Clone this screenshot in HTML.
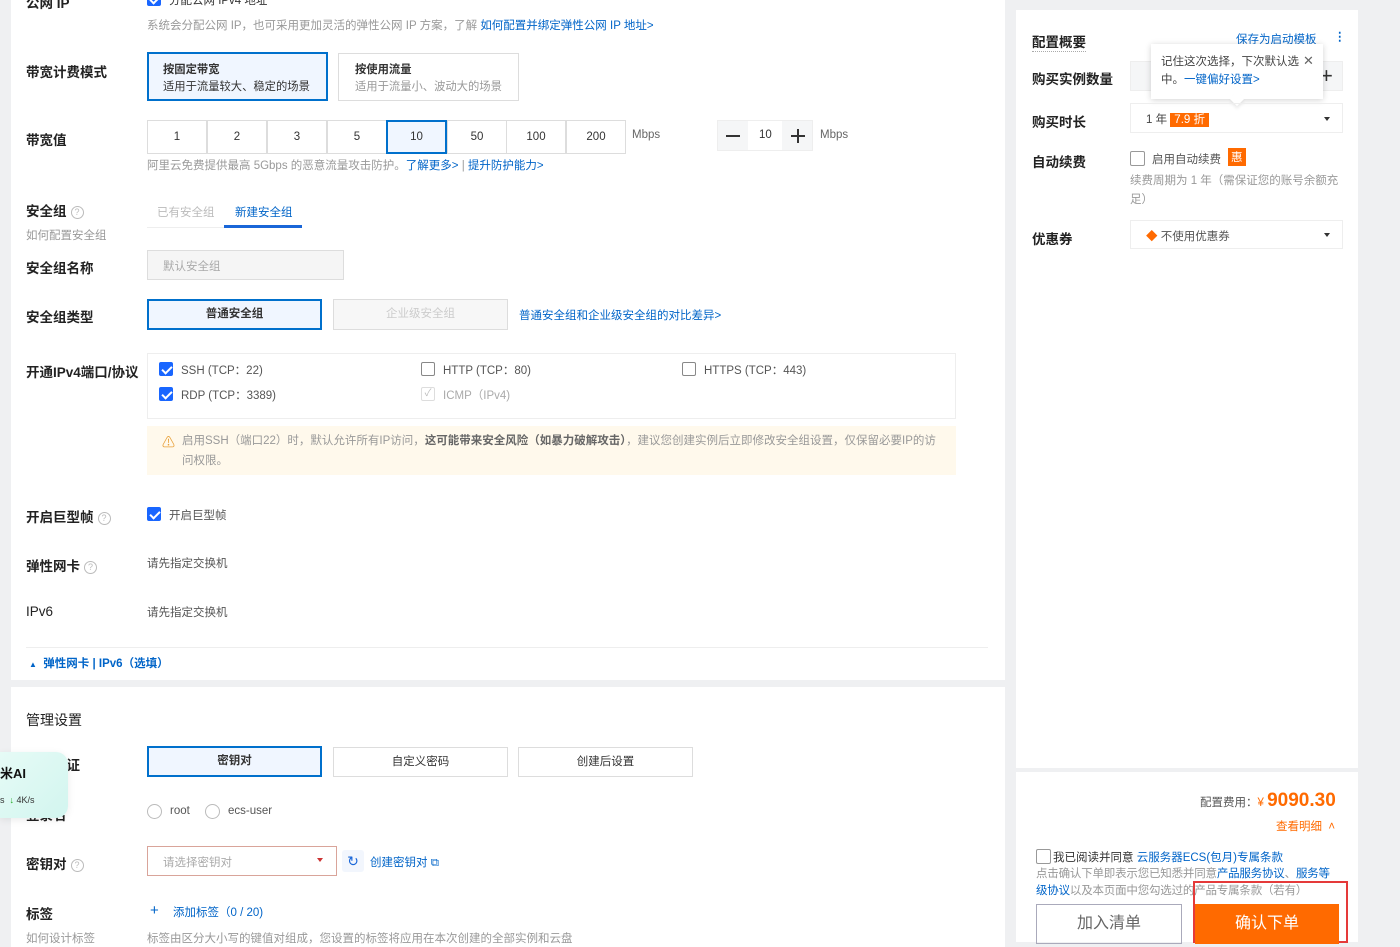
<!DOCTYPE html>
<html><head><meta charset="utf-8">
<style>
*{margin:0;padding:0;box-sizing:border-box}
body{width:1400px;height:941px;overflow:hidden;background:#eff0f2;font-family:"Liberation Sans","Noto Sans CJK SC",sans-serif;font-size:11.5px;color:#333;position:relative}
.a{position:absolute;white-space:nowrap}
.panel{position:absolute;background:#fff}
.lbl{position:absolute;font-size:13.5px;font-weight:bold;color:#222;white-space:nowrap}
.g{color:#999}
.blue{color:#0064c8}
.box{position:absolute;border:1px solid #ddd;background:#fff;text-align:center;color:#333}
.sel{border:2px solid #0070cc;background:#f0f6ff}
.cb{position:absolute;width:14px;height:14px;border:1px solid #888;border-radius:2px;background:#fff}
.cb.on{background:#1966ff;border-color:#1966ff}
.cb.on::after{content:"";position:absolute;left:4px;top:1px;width:4px;height:8px;border:solid #fff;border-width:0 2px 2px 0;transform:rotate(45deg)}
.q{display:inline-block;width:13px;height:13px;border:1px solid #bbb;border-radius:50%;font-size:9px;color:#bbb;text-align:center;line-height:11px;font-weight:normal;vertical-align:1px;margin-left:4px}
.radio{position:absolute;width:15px;height:15px;border:1px solid #bbb;border-radius:50%}
</style></head><body>

<div class="panel" style="left:11px;top:0;width:994px;height:680px"></div>
<div class="lbl" style="left:26px;top:-8px">公网 IP</div>
<div class="cb on" style="left:147px;top:-8px"></div>
<div class="a" style="left:169px;top:-8px">分配公网 IPv4 地址</div>
<div class="a g" style="left:147px;top:17px">系统会分配公网 IP，也可采用更加灵活的弹性公网 IP 方案，了解 <span class="blue">如何配置并绑定弹性公网 IP 地址&gt;</span></div>

<div class="lbl" style="left:26px;top:61px">带宽计费模式</div>
<div class="box sel" style="left:147px;top:52px;width:181px;height:49px;text-align:left;padding:8px 14px;line-height:17px;font-weight:bold;color:#333;font-size:11.3px">按固定带宽<br><span style="font-weight:normal">适用于流量较大、稳定的场景</span></div>
<div class="box" style="left:338px;top:53px;width:181px;height:48px;text-align:left;padding:8px 16px;line-height:17px;font-weight:bold;color:#333;font-size:11.3px">按使用流量<br><span style="font-weight:normal;color:#999">适用于流量小、波动大的场景</span></div>

<div class="lbl" style="left:26px;top:129px">带宽值</div>
<div class="box" style="left:147px;top:120px;width:60px;height:34px;line-height:32px">1</div>
<div class="box" style="left:207px;top:120px;width:60px;height:34px;line-height:32px">2</div>
<div class="box" style="left:267px;top:120px;width:60px;height:34px;line-height:32px">3</div>
<div class="box" style="left:327px;top:120px;width:60px;height:34px;line-height:32px">5</div>
<div class="box sel" style="left:386px;top:120px;width:61px;height:34px;line-height:30px">10</div>
<div class="box" style="left:447px;top:120px;width:60px;height:34px;line-height:32px">50</div>
<div class="box" style="left:506px;top:120px;width:60px;height:34px;line-height:32px">100</div>
<div class="box" style="left:566px;top:120px;width:60px;height:34px;line-height:32px">200</div>
<div class="a" style="left:632px;top:129px;color:#666">Mbps</div>
<div class="a" style="left:717px;top:120px;width:96px;height:31px;background:#f5f6f7;border:1px solid #eee"></div>
<div class="a" style="left:748px;top:121px;width:34px;height:29px;background:#fff"></div>
<div class="a" style="left:726px;top:135px;width:14px;height:2px;background:#333"></div>
<div class="a" style="left:759px;top:129px">10</div>
<div class="a" style="left:791px;top:135px;width:14px;height:2px;background:#333"></div>
<div class="a" style="left:797px;top:129px;width:2px;height:14px;background:#333"></div>
<div class="a" style="left:820px;top:129px;color:#666">Mbps</div>
<div class="a g" style="left:147px;top:157px">阿里云免费提供最高 5Gbps 的恶意流量攻击防护。<span class="blue">了解更多&gt;</span> | <span class="blue">提升防护能力&gt;</span></div>

<div class="lbl" style="left:26px;top:200px">安全组<span class="q">?</span></div>
<div class="a g" style="left:26px;top:227px">如何配置安全组</div>
<div class="a" style="left:147px;top:227px;width:155px;height:1px;background:#eee"></div>
<div class="a" style="left:157px;top:204px;color:#bbb">已有安全组</div>
<div class="a blue" style="left:235px;top:204px">新建安全组</div>
<div class="a" style="left:224px;top:225px;width:78px;height:3px;background:#1966d8"></div>

<div class="lbl" style="left:26px;top:257px">安全组名称</div>
<div class="a" style="left:147px;top:250px;width:197px;height:30px;background:#f5f5f5;border:1px solid #ddd;padding:7px 15px;color:#aaa">默认安全组</div>

<div class="lbl" style="left:26px;top:306px">安全组类型</div>
<div class="box sel" style="left:147px;top:299px;width:175px;height:31px;line-height:27px;font-weight:bold">普通安全组</div>
<div class="box" style="left:333px;top:299px;width:175px;height:31px;line-height:29px;background:#f7f7f7;color:#ccc">企业级安全组</div>
<div class="a blue" style="left:519px;top:307px">普通安全组和企业级安全组的对比差异&gt;</div>

<div class="lbl" style="left:26px;top:361px">开通IPv4端口/协议</div>
<div class="a" style="left:147px;top:353px;width:809px;height:66px;border:1px solid #eee"></div>
<div class="cb on" style="left:159px;top:362px"></div><div class="a" style="left:181px;top:362px;color:#555">SSH (TCP：22)</div>
<div class="cb" style="left:421px;top:362px"></div><div class="a" style="left:443px;top:362px;color:#555">HTTP (TCP：80)</div>
<div class="cb" style="left:682px;top:362px"></div><div class="a" style="left:704px;top:362px;color:#555">HTTPS (TCP：443)</div>
<div class="cb on" style="left:159px;top:387px"></div><div class="a" style="left:181px;top:387px;color:#555">RDP (TCP：3389)</div>
<div class="cb" style="left:421px;top:387px;border-color:#ddd;color:#bbb;font-size:10px;line-height:12px;text-align:center">✓</div><div class="a" style="left:443px;top:387px;color:#aaa">ICMP（IPv4)</div>
<div class="a" style="left:147px;top:426px;width:809px;height:49px;background:#fff9ec;padding:5px 20px 6px 35px;color:#999;white-space:normal;line-height:20px;font-size:11.5px">启用SSH（端口22）时，默认允许所有IP访问，<b style="color:#666">这可能带来安全风险（如暴力破解攻击）</b>，建议您创建实例后立即修改安全组设置，仅保留必要IP的访问权限。</div>
<div class="a" style="left:162px;top:432px;color:#e8a13a;font-size:13px">⚠</div>

<div class="lbl" style="left:26px;top:506px">开启巨型帧<span class="q">?</span></div>
<div class="cb on" style="left:147px;top:507px"></div>
<div class="a" style="left:169px;top:507px;color:#555">开启巨型帧</div>

<div class="lbl" style="left:26px;top:555px">弹性网卡<span class="q">?</span></div>
<div class="a" style="left:147px;top:555px;color:#555">请先指定交换机</div>
<div class="lbl" style="left:26px;top:604px;font-weight:normal;color:#222">IPv6</div>
<div class="a" style="left:147px;top:604px;color:#555">请先指定交换机</div>
<div class="a" style="left:26px;top:647px;width:962px;height:1px;background:#eee"></div>
<div class="a blue" style="left:29px;top:655px;font-weight:bold"><span style="font-size:8px">▲</span>&nbsp; 弹性网卡 | IPv6（选填）</div>

<div class="panel" style="left:11px;top:687px;width:994px;height:260px"></div>
<div class="lbl" style="left:26px;top:710px;font-weight:normal;color:#222;font-size:14px">管理设置</div>
<div class="lbl" style="left:26px;top:754px">登录凭证</div>
<div class="box sel" style="left:147px;top:746px;width:175px;height:31px;line-height:27px;font-weight:bold">密钥对</div>
<div class="box" style="left:333px;top:747px;width:175px;height:30px;line-height:28px">自定义密码</div>
<div class="box" style="left:518px;top:747px;width:175px;height:30px;line-height:28px">创建后设置</div>
<div class="lbl" style="left:26px;top:804px">登录名</div>
<div class="radio" style="left:147px;top:804px"></div><div class="a" style="left:170px;top:805px;color:#555">root</div>
<div class="radio" style="left:205px;top:804px"></div><div class="a" style="left:228px;top:805px;color:#555">ecs-user</div>
<div class="a" style="left:0;top:752px;width:68px;height:66px;background:linear-gradient(135deg,#e6fbf6,#d2f5ef);border-radius:0 12px 12px 0;box-shadow:0 2px 8px rgba(0,0,0,.08)"></div>
<div class="a" style="left:0;top:763px;font-weight:bold;font-size:13px;color:#111">米AI</div>
<div class="a" style="left:0;top:795px;font-size:9px;color:#333">s &nbsp;<span style="color:#2a2">↓</span> 4K/s</div>

<div class="lbl" style="left:26px;top:853px">密钥对<span class="q">?</span></div>
<div class="a" style="left:147px;top:846px;width:190px;height:30px;border:1px solid #d9a49a;padding:7px 15px;color:#aaa">请选择密钥对</div>
<div class="a" style="left:317px;top:858px;width:0;height:0;border:3px solid transparent;border-top:4px solid #c33"></div>
<div class="a" style="left:342px;top:850px;width:22px;height:22px;background:#f2f6fd;border-radius:3px;color:#1966d8;text-align:center;line-height:22px;font-size:14px">↻</div>
<div class="a blue" style="left:370px;top:854px">创建密钥对 ⧉</div>
<div class="lbl" style="left:26px;top:903px">标签</div>
<div class="a g" style="left:26px;top:930px">如何设计标签</div>
<div class="a blue" style="left:150px;top:902px;font-size:15px">+</div>
<div class="a blue" style="left:173px;top:904px">添加标签（0 / 20)</div>
<div class="a g" style="left:147px;top:930px">标签由区分大小写的键值对组成，您设置的标签将应用在本次创建的全部实例和云盘</div>

<div class="panel" style="left:1016px;top:10px;width:342px;height:758px"></div>
<div class="lbl" style="left:1032px;top:31px;border-bottom:1px dotted #aaa">配置概要</div>
<div class="a blue" style="left:1236px;top:31px">保存为启动模板</div>
<div class="a blue" style="left:1334px;top:29px;font-weight:bold">⋮</div>
<div class="lbl" style="left:1032px;top:68px">购买实例数量</div>
<div class="a" style="left:1130px;top:61px;width:213px;height:30px;background:#f5f6f7;border:1px solid #eee"></div>
<div class="a" style="left:1320px;top:63px;font-size:22px;color:#333;line-height:26px">+</div>
<div class="a" style="left:1151px;top:44px;width:172px;height:55px;background:#fff;box-shadow:0 1px 6px rgba(0,0,0,.18);padding:9px 22px 9px 10px;line-height:18px;color:#444;white-space:normal;font-size:11.5px">记住这次选择，下次默认选中。<span class="blue">一键偏好设置&gt;</span></div>
<div class="a" style="left:1303px;top:53px;color:#666;font-size:13px">✕</div>
<div class="a" style="left:1232px;top:94px;width:10px;height:10px;background:#fff;transform:rotate(45deg);box-shadow:2px 2px 3px rgba(0,0,0,.08)"></div>
<div class="lbl" style="left:1032px;top:111px">购买时长</div>
<div class="a" style="left:1130px;top:103px;width:213px;height:30px;border:1px solid #eee;padding:7px 15px;color:#444">1 年 <span style="background:#ff6a00;color:#fff;padding:1px 4px">7.9 折</span></div>
<div class="a" style="left:1324px;top:117px;border:3px solid transparent;border-top:4px solid #333"></div>
<div class="lbl" style="left:1032px;top:151px">自动续费</div>
<div class="cb" style="left:1130px;top:151px;width:15px;height:15px;border-color:#999"></div>
<div class="a" style="left:1152px;top:151px;color:#555">启用自动续费</div>
<div class="a" style="left:1228px;top:148px;background:#ff6a00;color:#fff;padding:1px 3px">惠</div>
<div class="a g" style="left:1130px;top:172px;line-height:19px;white-space:normal;width:215px;font-size:11.5px">续费周期为 1 年（需保证您的账号余额充足）</div>
<div class="lbl" style="left:1032px;top:228px">优惠券</div>
<div class="a" style="left:1130px;top:220px;width:213px;height:29px;border:1px solid #eee;padding:7px 15px;color:#555"><span style="color:#ff6a00">◆</span> 不使用优惠券</div>
<div class="a" style="left:1324px;top:233px;border:3px solid transparent;border-top:4px solid #333"></div>

<div class="panel" style="left:1016px;top:772px;width:342px;height:170px"></div>
<div class="a" style="left:1200px;top:790px;color:#555">配置费用：<span style="color:#ff6a00">¥</span> <span style="color:#ff6a00;font-size:19px;font-weight:bold">9090.30</span></div>
<div class="a" style="left:1276px;top:818px;color:#ff6a00">查看明细 &nbsp;˄</div>
<div class="cb" style="left:1036px;top:849px;width:15px;height:15px;border-color:#999"></div>
<div class="a" style="left:1053px;top:849px;color:#333">我已阅读并同意 <span class="blue">云服务器ECS(包月)专属条款</span></div>
<div class="a g" style="left:1036px;top:866px;width:305px;white-space:normal;line-height:17px;letter-spacing:-0.2px">点击确认下单即表示您已知悉并同意<span class="blue">产品服务协议</span>、<span class="blue">服务等级协议</span>以及本页面中您勾选过的产品专属条款（若有）</div>
<div class="a" style="left:1036px;top:904px;width:146px;height:40px;border:1px solid #aab;text-align:center;line-height:38px;font-size:16px;color:#666">加入清单</div>
<div class="a" style="left:1193px;top:881px;width:155px;height:62px;border:2px solid #e53a3a"></div>
<div class="a" style="left:1195px;top:904px;width:144px;height:40px;background:#ff6a00;text-align:center;line-height:40px;font-size:16px;color:#fff">确认下单</div>
</body></html>
